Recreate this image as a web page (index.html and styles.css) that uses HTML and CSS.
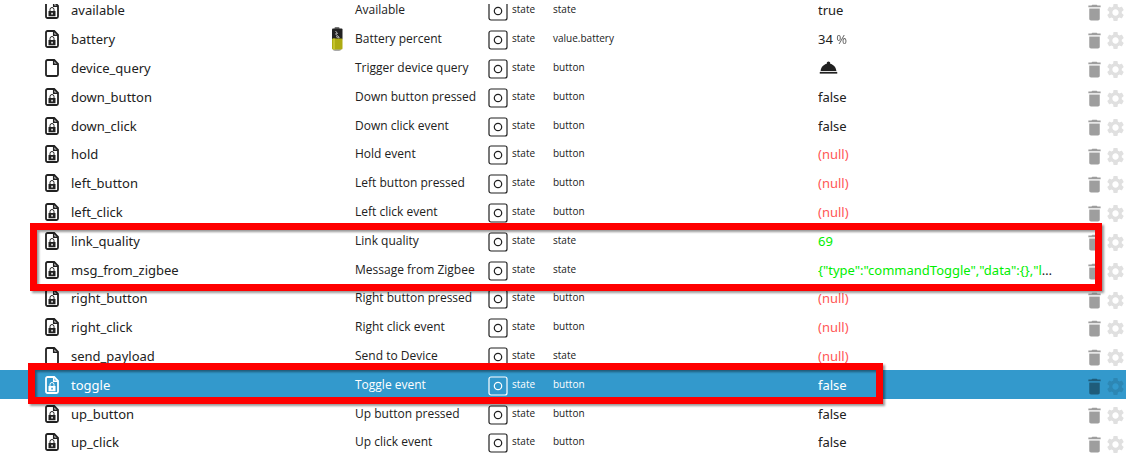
FILE: index.html
```html
<!DOCTYPE html>
<html lang="en">
<head>
  <meta charset="UTF-8" />
  <title>Objects</title>
  <meta name="viewport" content="width=device-width, initial-scale=1.0" />
  <link rel="stylesheet" href="styles.css">
</head>
<body>
  <svg class="sprite" aria-hidden="true">
    <symbol id="file" viewBox="0 0 14 18">
      <path d="M2.5 1h6.7L13 4.8v10.7a1.5 1.5 0 0 1-1.5 1.5h-9A1.5 1.5 0 0 1 1 15.5v-13A1.5 1.5 0 0 1 2.5 1z" fill="none" stroke="currentColor" stroke-width="1.8" />
      <path d="M8.7 1v4.3H13" fill="none" stroke="currentColor" stroke-width="1.5" />
    </symbol>
    <symbol id="lock" viewBox="0 0 14 18">
      <path d="M5 10V8.500a2 2 0 0 1 4 0V10" fill="none" stroke="currentColor" />
      <path d="M3.5 10h7v5.300h-7zm2.800 1.800v1.700h1.500v-1.700z" fill="currentColor" fill-rule="evenodd" />
    </symbol>
    <symbol id="state" viewBox="0 0 20 20">
      <rect x="1" y="1" width="18" height="18" rx="2" fill="none" stroke="currentColor" stroke-width="1.2" />
      <circle cx="10" cy="10" r="3.7" fill="none" stroke="currentColor" stroke-width="1.2" />
    </symbol>
    <symbol id="delete" viewBox="0 0 24 24">
      <path d="M6 19c0 1.100.9 2 2 2h8c1.100 0 2-.9 2-2V8H6z" fill="currentColor" />
      <path d="M6 7h12v1H6z" fill="currentColor" opacity="0.5" />
      <path d="M19 4h-3.500l-1-1h-5l-1 1H5v2h14z" fill="currentColor" />
    </symbol>
    <symbol id="settings" viewBox="0 0 24 24">
      <path d="M19.140 12.940c.04-.3.060-.61.060-.94 0-.32-.02-.64-.07-.94l2.030-1.580c.18-.14.230-.41.120-.61l-1.920-3.320c-.12-.22-.37-.29-.59-.22l-2.390.96c-.5-.38-1.030-.7-1.620-.94l-.36-2.540c-.04-.24-.24-.41-.48-.41h-3.840c-.24 0-.43.170-.47.410l-.36 2.540c-.59.240-1.130.570-1.620.940l-2.390-.96c-.22-.08-.47 0-.59.220L2.740 8.870c-.12.210-.08.470.120.610l2.030 1.580c-.05.300-.09.630-.09.940s.02.640.070.940l-2.030 1.580c-.18.140-.23.410-.12.610l1.920 3.320c.12.220.370.290.590.220l2.390-.96c.5.380 1.030.7 1.620.940l.36 2.540c.05.240.240.410.480.410h3.840c.24 0 .44-.17.470-.41l.36-2.540c.59-.24 1.130-.56 1.620-.94l2.390.96c.22.080.470 0 .59-.22l1.920-3.320c.12-.22.070-.47-.12-.61l-2.010-1.580zM12 15.600c-1.980 0-3.600-1.620-3.600-3.600s1.620-3.600 3.600-3.600 3.600 1.620 3.600 3.600-1.620 3.600-3.600 3.600z" fill="currentColor" />
    </symbol>
    <symbol id="bell" viewBox="0 0 24 24">
      <path d="M2 17h20v2H2z" fill="currentColor" />
      <path d="M13.840 7.790c.1-.24.160-.51.160-.79 0-1.100-.9-2-2-2s-2 .9-2 2c0 .28.060.55.160.790C6.250 8.600 3.270 11.930 3 16h18c-.27-4.070-3.250-7.400-7.160-8.210z" fill="currentColor" />
    </symbol>
    <symbol id="battery" viewBox="0 0 12 26">
      <ellipse cx="6" cy="23.500" rx="4" ry="1.500" fill="#aaa" />
      <rect x="3.500" y="1" width="5" height="3" rx="1" fill="#777" />
      <rect x="1" y="2.500" width="10.500" height="11" rx="1" fill="#222" />
      <rect x="1" y="12.500" width="10.500" height="11" rx="1" fill="#adab12" />
      <path d="M3 12.500v11" stroke="#cccb35" stroke-width="1.500" />
      <path d="M4.500 5l2 2.500-2 .5 4 3.500M5 10.500l3 1.500" stroke="#bbb" fill="none" />
    </symbol>
  </svg>

  <main class="objects">
    <table class="object-table">
      <colgroup>
        <col class="col-icon">
        <col class="col-id">
        <col class="col-picture">
        <col class="col-name">
        <col class="col-type">
        <col class="col-role">
        <col class="col-value">
        <col class="col-actions">
      </colgroup>
      <tbody id="objectRows"></tbody>
    </table>
    <div class="marker marker-message"></div>
    <div class="marker marker-toggle"></div>
  </main>

  <script>
    const none = '<span class="null">(null)</span>';

    // id, name, role, value
    const objects = [
      ['available', 'Available', 'state', 'true'],
      ['battery', 'Battery percent', 'value.battery', '34 <span class="unit">%</span>'],
      ['device_query', 'Trigger device query', 'button', '<button class="press" aria-label="Press">' + icon('bell') + '</button>'],
      ['down_button', 'Down button pressed', 'button', 'false'],
      ['down_click', 'Down click event', 'button', 'false'],
      ['hold', 'Hold event', 'button', none],
      ['left_button', 'Left button pressed', 'button', none],
      ['left_click', 'Left click event', 'button', none],
      ['link_quality', 'Link quality', 'state', '<span class="changed">69</span>'],
      ['msg_from_zigbee', 'Message from Zigbee', 'state', '<span class="changed">{"type":"commandToggle","data":{},"linkquality":69}</span>'],
      ['right_button', 'Right button pressed', 'button', none],
      ['right_click', 'Right click event', 'button', none],
      ['send_payload', 'Send to Device', 'state', none],
      ['toggle', 'Toggle event', 'button', 'false'],
      ['up_button', 'Up button pressed', 'button', 'false'],
      ['up_click', 'Up click event', 'button', 'false']
    ];

    const writable = ['device_query', 'send_payload'];

    function icon(name) {
      return `<svg class="icon icon-${name}"><use href="#${name}"></use></svg>`;
    }

    document.getElementById('objectRows').innerHTML = objects
      .map(([id, name, role, value]) => `
        <tr class="${id === 'toggle' ? 'selected' : ''}">
          <td><span class="file">${icon('file')}${writable.includes(id) ? '' : icon('lock')}</span></td>
          <td class="id">${id}</td>
          <td>${id === 'battery' ? icon('battery') : ''}</td>
          <td class="name">${name}</td>
          <td><span class="type">${icon('state')}<span class="small">state</span></span></td>
          <td><span class="small">${role}</span></td>
          <td class="value">${value}</td>
          <td>
            <div class="actions">
              <button class="delete" aria-label="Delete ${id}">${icon('delete')}</button>
              <button class="settings" aria-label="Settings ${id}">${icon('settings')}</button>
            </div>
          </td>
        </tr>`)
      .join('');
  </script>
</body>
</html>
```
FILE: styles.css
```css
body {
  margin: 0;
  background-color: #fff;
  color: #212121;
  font-family: 'Noto Sans', 'Open Sans', sans-serif;
  font-size: 13px;
  overflow: hidden;
}

.sprite {
  display: none;
}

.objects {
  position: relative;
  margin-top: 4px;
  overflow: hidden;
}

/* list is scrolled, first row is partly hidden */
.object-table {
  width: 100%;
  margin-top: -8px;
  table-layout: fixed;
  border-collapse: collapse;
}

.col-icon { width: 71px; }
.col-id { width: 260px; }
.col-picture { width: 24px; }
.col-name { width: 133px; }
.col-type { width: 65px; }
.col-value { width: 236px; }
.col-actions { width: 72px; }

.object-table td {
  height: 29px;
  padding: 0;
  line-height: 20px;
  white-space: nowrap;
  vertical-align: middle;
}

.object-table tr:nth-child(5n + 1) td {
  height: 28px;
}

.icon {
  display: block;
}

.file {
  display: grid;
  margin-left: 45px;
}

.file .icon {
  grid-area: 1 / 1;
  width: 14px;
  height: 18px;
}

.icon-battery {
  width: 12px;
  height: 26px;
}

.icon-state {
  width: 20px;
  height: 20px;
}

.name {
  font-family: 'Open Sans', sans-serif;
  font-size: 12px;
}

.type {
  display: flex;
  align-items: center;
  gap: 4px;
  padding-top: 2px;
}

.small {
  display: block;
  font-family: 'Open Sans', sans-serif;
  font-size: 10px;
  line-height: 16px;
  padding-bottom: 2px;
}

.type .small {
  padding-bottom: 4px;
}

.object-table .value {
  overflow: hidden;
  text-overflow: ellipsis;
}

.unit {
  opacity: 0.7;
}

.null {
  color: #f55;
}

.changed {
  color: #0e0;
}

button {
  padding: 0;
  border: none;
  background: none;
  color: inherit;
  cursor: pointer;
}

.press {
  display: block;
}

.icon-bell {
  width: 21px;
  height: 21px;
}

.actions {
  display: flex;
  margin-left: 30px;
  padding-top: 4px;
}

.actions .icon {
  width: 21px;
  height: 21px;
}

.delete {
  color: #9e9e9e;
}

.settings {
  color: #e0e0e0;
}

.selected {
  background-color: #3399cc;
  color: #fff;
}

.selected .delete {
  color: #1f5c7a;
}

.selected .settings {
  color: #2d87b4;
}

/* red frames over the list */
.marker {
  position: absolute;
  box-sizing: border-box;
  border: 7px solid #f00;
  filter: drop-shadow(2px 2px 1px rgba(0, 0, 0, 0.4));
  pointer-events: none;
}

.marker-message {
  top: 219px;
  left: 30px;
  right: 24px;
  height: 68px;
}

.marker-toggle {
  top: 359px;
  left: 28px;
  right: 243px;
  height: 41px;
}
```
